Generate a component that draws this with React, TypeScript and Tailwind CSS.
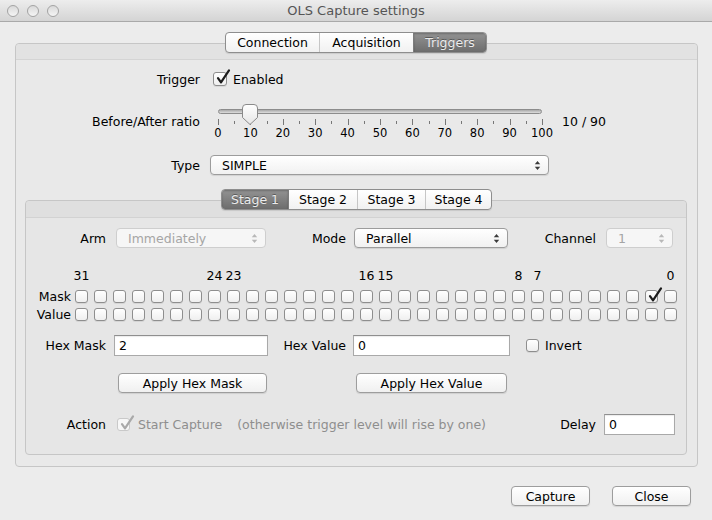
import React from "react";

type CBProps = { checked?: boolean; disabled?: boolean; small?: boolean; className?: string };

function CheckBox({ checked, disabled, small, className = "" }: CBProps) {
  return (
    <span
      className={`relative inline-block shrink-0 rounded-[3px] border ${
        small ? "w-[13px] h-[13px]" : "w-[14px] h-[14px]"
      } ${
        disabled
          ? "border-[#c9c9c9] bg-[#f7f7f7]"
          : "border-[#8e8e8e] bg-gradient-to-b from-white to-[#efefef] shadow-[0_1px_0_rgba(0,0,0,0.07)]"
      } ${className}`}
    >
      {checked && (
        <svg
          className="absolute left-[1px] top-[-4px] overflow-visible"
          width="16"
          height="17"
          viewBox="0 0 16 17"
        >
          <path
            d="M3 9.2 L6 13.4 L14 1.4"
            fill="none"
            stroke={disabled ? "#a9a9a9" : "#1c1c1c"}
            strokeWidth="2.2"
            strokeLinecap="round"
            strokeLinejoin="round"
          />
        </svg>
      )}
    </span>
  );
}

function Arrows({ disabled }: { disabled?: boolean }) {
  const c = disabled ? "#b8b8b8" : "#3a3a3a";
  return (
    <svg width="7" height="11" viewBox="0 0 7 11" className="shrink-0">
      <path d="M0.8 4.3 L3.5 1 L6.2 4.3 Z" fill={c} />
      <path d="M0.8 6.7 L3.5 10 L6.2 6.7 Z" fill={c} />
    </svg>
  );
}

function Combo({ value, disabled, className = "" }: { value: string; disabled?: boolean; className?: string }) {
  return (
    <div
      className={`flex items-center h-[20px] rounded-[4px] border pl-[11px] pr-[7px] shrink-0 ${
        disabled
          ? "border-[#cecece] bg-[#f6f6f6] text-[#a5a5a5]"
          : "border-[#9c9c9c] bg-gradient-to-b from-white to-[#f1f1f1] shadow-[0_1px_1px_rgba(0,0,0,0.1)]"
      } ${className}`}
    >
      <span className="flex-1 whitespace-nowrap overflow-hidden">{value}</span>
      <Arrows disabled={disabled} />
    </div>
  );
}

function TextField({ value, className = "" }: { value: string; className?: string }) {
  return (
    <div
      className={`flex items-center h-[21px] shrink-0 border border-[#a9a9a9] border-t-[#8f8f8f] bg-white pl-[4px] shadow-[inset_0_1px_1px_rgba(0,0,0,0.08)] ${className}`}
    >
      {value}
    </div>
  );
}

function Button({ children, className = "" }: { children: React.ReactNode; className?: string }) {
  return (
    <div
      className={`flex items-center justify-center h-[20px] shrink-0 rounded-[4px] border border-[#9d9d9d] bg-gradient-to-b from-white to-[#f0f0f0] shadow-[0_1px_1px_rgba(0,0,0,0.1)] ${className}`}
    >
      {children}
    </div>
  );
}

function Segmented({ items, selected }: { items: { label: string; w: string }[]; selected: number }) {
  return (
    <div className="flex h-[21px] rounded-[4px] border border-[#8e8e8e] bg-gradient-to-b from-white to-[#f1f1f1] shadow-[0_1px_1px_rgba(0,0,0,0.1)] overflow-hidden">
      {items.map((it, i) => (
        <div
          key={it.label}
          className={`flex items-center justify-center h-full ${it.w} ${
            i > 0 ? (i === selected || i - 1 === selected ? "border-l border-[#7c7c7c]" : "border-l border-[#c6c6c6]") : ""
          } ${
            i === selected
              ? "bg-gradient-to-b from-[#939393] to-[#6d6d6d] text-[#ececec] [text-shadow:0_-1px_0_rgba(0,0,0,0.35)] shadow-[inset_0_1px_2px_rgba(0,0,0,0.25)]"
              : "text-black"
          }`}
        >
          {it.label}
        </div>
      ))}
    </div>
  );
}

function Slider() {
  const ticks = Array.from({ length: 21 }, (_, i) => i);
  return (
    <div className="relative w-[324px] h-[36px] shrink-0">
      <div className="absolute left-0 right-0 top-[5px] h-[5px] rounded-full border border-[#8c8c8c] bg-gradient-to-b from-[#a9a9a9] to-[#dedede]" />
      <svg className="absolute left-[-1px] top-[15px]" width="326" height="8" viewBox="0 0 326 8">
        {ticks.map((i) => {
          const x = Math.round(1 + i * 16.2) + 0.5;
          const major = i % 2 === 0;
          return (
            <line
              key={i}
              x1={x}
              x2={x}
              y1={major ? 0 : 2}
              y2={major ? 6 : 5}
              stroke="#777"
              strokeWidth="1"
            />
          );
        })}
      </svg>
      {ticks
        .filter((i) => i % 2 === 0)
        .map((i) => (
          <span
            key={i}
            className="absolute top-[23px] w-[30px] text-center text-[11.5px] leading-[13px]"
            style={{ left: i * 16.2 - 15 }}
          >
            {i * 5}
          </span>
        ))}
      <svg className="absolute left-[24px] top-0" width="17" height="22" viewBox="0 0 17 22">
        <defs>
          <linearGradient id="thumbg" x1="0" y1="0" x2="0" y2="1">
            <stop offset="0" stopColor="#ffffff" />
            <stop offset="1" stopColor="#e6e6e6" />
          </linearGradient>
        </defs>
        <path
          d="M0.5 4 Q0.5 0.5 4 0.5 H12 Q15.5 0.5 15.5 4 V13.5 L8 20.5 L0.5 13.5 Z"
          fill="url(#thumbg)"
          stroke="#8a8a8a"
          strokeWidth="1"
        />
      </svg>
    </div>
  );
}

const bitLabels: Record<number, string> = { 31: "31", 24: "24", 23: "23", 16: "16", 15: "15", 8: "8", 7: "7", 0: "0" };

export default function App() {
  const bits = Array.from({ length: 32 }, (_, i) => 31 - i);
  return (
    <div className="w-[712px] h-[520px] bg-[#ececec] font-['DejaVu_Sans',sans-serif] text-[12.5px] leading-[15px] text-black overflow-hidden flex flex-col">
      {/* Title bar */}
      <div className="h-[22px] shrink-0 grid grid-cols-[1fr_auto_1fr] items-center bg-gradient-to-b from-[#ededed] to-[#d4d4d4] border-b border-[#a9a9a9]">
        <div className="flex gap-[8px] pl-[7px]">
          {[0, 1, 2].map((i) => (
            <span
              key={i}
              className="w-[12px] h-[12px] rounded-full border border-[#a3a3a3] bg-gradient-to-b from-[#d9d9d9] to-[#f5f5f5]"
            />
          ))}
        </div>
        <div className="text-[13px] text-[#555555]">OLS Capture settings</div>
        <div />
      </div>

      {/* Top tabs */}
      <div className="flex justify-center mt-[10px] relative z-10">
        <Segmented
          selected={2}
          items={[
            { label: "Connection", w: "w-[93px]" },
            { label: "Acquisition", w: "w-[94px]" },
            { label: "Triggers", w: "w-[73px]" },
          ]}
        />
      </div>

      {/* Outer panel */}
      <div className="ml-[15px] mr-[14px] mt-[-10px] border border-[#c6c6c6] rounded-[4px] bg-[#e9e9e9] flex flex-col">
        <div className="h-[16px] bg-[#e2e2e2] border-b border-[#d4d4d4] rounded-t-[4px]" />

        <div className="flex items-center h-[20px] mt-[9px]">
          <div className="w-[184px] text-right">Trigger</div>
          <CheckBox checked className="ml-[13px]" />
          <span className="ml-[6px]">Enabled</span>
        </div>

        <div className="flex items-start mt-[15px]">
          <div className="w-[184px] text-right mt-[10px]">Before/After ratio</div>
          <div className="ml-[18px]">
            <Slider />
          </div>
          <div className="ml-[20px] mt-[10px]">10 / 90</div>
        </div>

        <div className="flex items-center h-[20px] mt-[15px]">
          <div className="w-[184px] text-right">Type</div>
          <Combo className="ml-[10px] w-[339px]" value="SIMPLE" />
        </div>

        {/* Stage tabs */}
        <div className="flex justify-center mt-[14px] relative z-10">
          <Segmented
            selected={0}
            items={[
              { label: "Stage 1", w: "w-[66px]" },
              { label: "Stage 2", w: "w-[69px]" },
              { label: "Stage 3", w: "w-[68px]" },
              { label: "Stage 4", w: "w-[66px]" },
            ]}
          />
        </div>

        <div className="ml-[9px] mr-[10px] mt-[-10px] mb-[11px] border border-[#c6c6c6] rounded-[4px] bg-[#e6e6e6] flex flex-col">
          <div className="h-[17px] bg-[#dfdfdf] border-b border-[#d2d2d2] rounded-t-[4px]" />

          <div className="flex items-center h-[20px] mt-[10px]">
            <div className="w-[80px] text-right">Arm</div>
            <Combo disabled className="ml-[10px] w-[150px]" value="Immediately" />
            <div className="w-[80px] text-right">Mode</div>
            <Combo className="ml-[8px] w-[154px]" value="Parallel" />
            <div className="w-[88px] text-right">Channel</div>
            <Combo disabled className="ml-[10px] w-[67px]" value="1" />
          </div>

          <div className="flex h-[15px] mt-[20px]">
            <div className="w-[47px] shrink-0" />
            {bits.map((b) => (
              <div key={b} className="w-[19px] shrink-0 pl-[2px]">
                <div className="w-[13px] flex justify-center whitespace-nowrap">{bitLabels[b] ?? ""}</div>
              </div>
            ))}
          </div>

          <div className="flex items-center h-[18px] mt-[4px]">
            <div className="w-[47px] shrink-0 text-right pr-[2px]">Mask</div>
            {bits.map((b) => (
              <div key={b} className="w-[19px] shrink-0 pl-[2px] flex items-center">
                <CheckBox small checked={b === 1} />
              </div>
            ))}
          </div>
          <div className="flex items-center h-[18px]">
            <div className="w-[47px] shrink-0 text-right pr-[2px]">Value</div>
            {bits.map((b) => (
              <div key={b} className="w-[19px] shrink-0 pl-[2px] flex items-center">
                <CheckBox small />
              </div>
            ))}
          </div>

          <div className="flex items-center h-[21px] mt-[12px]">
            <div className="w-[80px] text-right">Hex Mask</div>
            <TextField className="ml-[8px] w-[154px]" value="2" />
            <div className="w-[78px] text-right">Hex Value</div>
            <TextField className="ml-[7px] w-[157px]" value="0" />
            <CheckBox small className="ml-[16px]" />
            <span className="ml-[6px]">Invert</span>
          </div>

          <div className="flex h-[20px] mt-[17px]">
            <Button className="ml-[92px] w-[149px]">Apply Hex Mask</Button>
            <Button className="ml-[89px] w-[151px]">Apply Hex Value</Button>
          </div>

          <div className="flex items-center h-[21px] mt-[21px] mb-[19px] pr-[11px]">
            <div className="w-[80px] text-right">Action</div>
            <CheckBox small checked disabled className="ml-[11px]" />
            <span className="ml-[8px] text-[#8e8e8e]">Start Capture</span>
            <span className="ml-[15px] text-[#8e8e8e]">(otherwise trigger level will rise by one)</span>
            <div className="flex-1" />
            <span>Delay</span>
            <TextField className="ml-[8px] w-[71px]" value="0" />
          </div>
        </div>
      </div>

      {/* Bottom buttons */}
      <div className="flex justify-end gap-[22px] mt-[19px] pr-[21px]">
        <Button className="w-[79px]">Capture</Button>
        <Button className="w-[79px]">Close</Button>
      </div>
    </div>
  );
}
